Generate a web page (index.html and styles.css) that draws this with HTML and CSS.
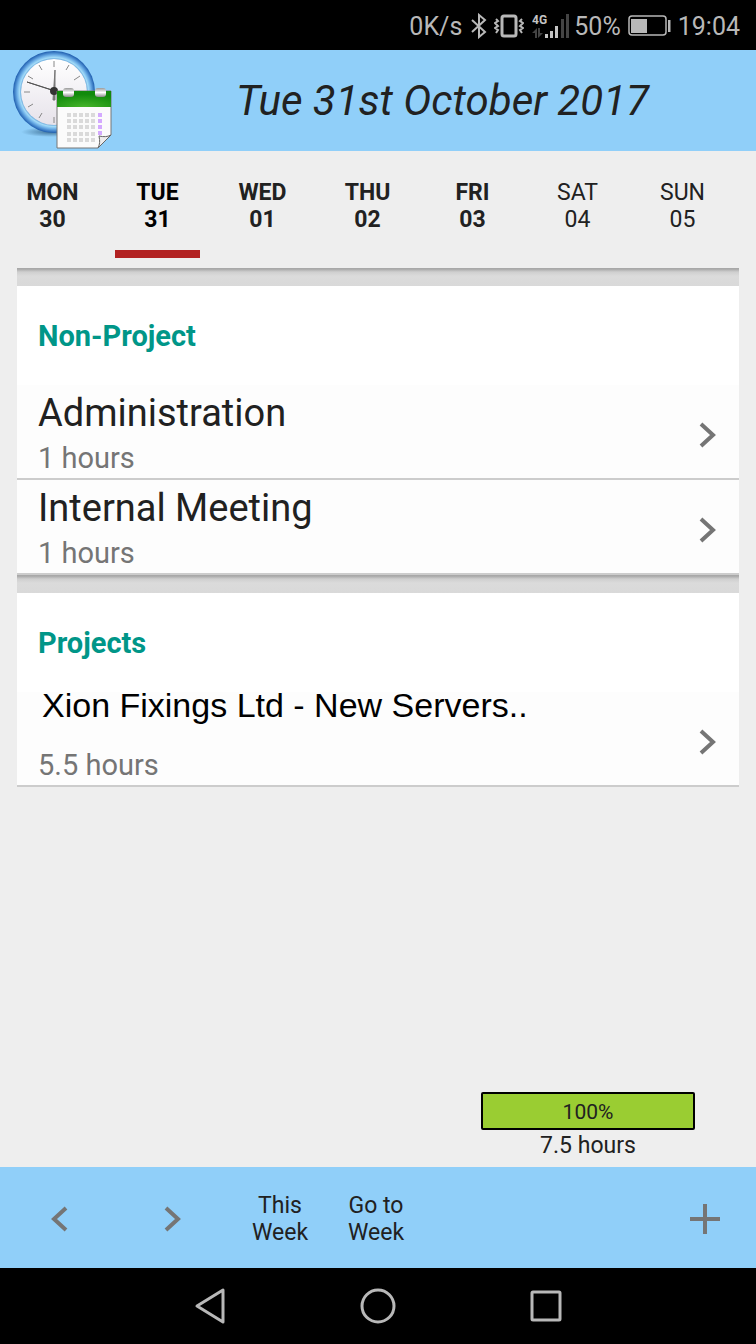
FILE: index.html
```html
<!DOCTYPE html>
<html lang="en">
<head>
  <meta charset="UTF-8">
  <meta name="viewport" content="width=device-width, initial-scale=1.0">
  <title>Timesheet</title>
  <link rel="stylesheet" href="styles.css">
</head>
<body>
  <div class="status-bar">
    <span>0K/s</span>
    <svg class="bluetooth" width="16" height="26" viewBox="0 0 16 26" fill="none" stroke="#b8b8b8" stroke-width="2">
      <path d="M1 7l13 12-6 5V2l6 5L1 19"/>
    </svg>
    <svg class="vibrate" width="30" height="24" viewBox="0 0 30 24" fill="none" stroke="#b8b8b8" stroke-width="2">
      <rect x="8" y="2" width="14" height="20" rx="2" stroke-width="3"/>
      <path d="M2 5l2 2-3 2 3 3-3 2 3 2-2 3M28 5l-2 2 3 2-3 3 3 2-3 2 2 3"/>
    </svg>
    <svg class="signal" width="38" height="26" viewBox="0 0 38 26">
      <text x="0" y="11" class="signal-text">4G</text>
      <path d="M0 20l5-5v10H3v-5zM11 20l-5 5V15h2v5z" fill="#444"/>
      <path d="M13 21h3v4h-3zM18 18h3v7h-3zM23 13h3v12h-3z" fill="#c4c4c4"/>
      <path d="M29 6h3v19h-3zM34 1h3v24h-3z" fill="#444"/>
    </svg>
    <span class="percent">50%</span>
    <svg class="battery" width="44" height="22" viewBox="0 0 44 22">
      <rect x="1" y="1" width="37" height="19" rx="3" fill="none" stroke="#b8b8b8" stroke-width="1.5"/>
      <rect x="3" y="4" width="16" height="14" fill="#b8b8b8"/>
      <path d="M40 5h2.500v12H40z" fill="#b8b8b8"/>
    </svg>
    <span>19:04</span>
  </div>

  <header class="header">
    <svg class="logo" width="102" height="101" viewBox="0 0 102 101">
      <defs>
        <radialGradient id="rim">
          <stop offset="76%" stop-color="#2f72be"/>
          <stop offset="84%" stop-color="#a4dcf8"/>
          <stop offset="90%" stop-color="#6eb0e8"/>
          <stop offset="100%" stop-color="#1d5cae"/>
        </radialGradient>
        <linearGradient id="face" x1="0" y1="0" x2="0" y2="1">
          <stop offset="0" stop-color="#fff"/>
          <stop offset="1" stop-color="#e6e2ea"/>
        </linearGradient>
        <radialGradient id="green" cx="50%" cy="100%" r="80%">
          <stop offset="0" stop-color="#46b52a"/>
          <stop offset="1" stop-color="#118a0c"/>
        </radialGradient>
        <linearGradient id="ring" x1="0" y1="0" x2="0" y2="1">
          <stop offset="0" stop-color="#999"/>
          <stop offset="50%" stop-color="#fff"/>
          <stop offset="1" stop-color="#888"/>
        </linearGradient>
        <radialGradient id="shade">
          <stop offset="0" stop-color="#1c4b70" stop-opacity=".7"/>
          <stop offset="1" stop-color="#1c4b70" stop-opacity="0"/>
        </radialGradient>
      </defs>
      <ellipse cx="38" cy="82" rx="30" ry="5" fill="url(#shade)"/>
      <circle cx="41" cy="42" r="41" fill="url(#rim)"/>
      <circle cx="41" cy="42" r="33" fill="url(#face)"/>
      <path d="M41 11v6M56 15l-3 5M67 26l-6 4M26 15l3 5M15 26l5 3M11 42h6M15 57l5-3M26 68l3-5M41 73v-6" stroke="#888" stroke-width="1" fill="none"/>
      <path d="M39 40l6 2-31-10z" fill="#555" stroke="#555" stroke-width="1"/>
      <path d="M40 50h2l0-30z" fill="#777" stroke="#777" stroke-width="1"/>
      <circle cx="41" cy="41" r="4" fill="#333"/>
      <path d="M44 41h54v44l-13 13H44z" fill="#fbfbfb" stroke="#777" stroke-width="1"/>
      <path d="M44 41h54v16H44z" fill="url(#green)"/>
      <rect x="50" y="38" width="11" height="9" rx="3" fill="url(#ring)"/>
      <rect x="82" y="38" width="11" height="9" rx="3" fill="url(#ring)"/>
      <path d="M54 65h28M54 71h28M54 77h28M54 84h28M54 90h28" stroke="#dadada" stroke-width="4" stroke-dasharray="4 2"/>
      <path d="M87 63v22" stroke="#d4aaff" stroke-width="4" stroke-dasharray="4 2"/>
      <path d="M85 98c2-4 2-7 1-12 5 1 8 1 12-1z" fill="#ececec" stroke="#666" stroke-width="1"/>
    </svg>
    <h1>Tue 31st October 2017</h1>
  </header>

  <nav class="days">
    <button class="day">MON<br>30</button>
    <button class="day active">TUE<br>31</button>
    <button class="day">WED<br>01</button>
    <button class="day">THU<br>02</button>
    <button class="day">FRI<br>03</button>
    <button class="day weekend">SAT<br>04</button>
    <button class="day weekend">SUN<br>05</button>
  </nav>

  <main>
    <section class="group">
      <h2>Non-Project</h2>
      <a class="item" href="#">
        <span class="item-text">
          <span class="name">Administration</span>
          <span class="hours">1 hours</span>
        </span>
        <svg width="18" height="26" viewBox="0 0 18 26"><path d="M2 2l12 11L2 24" class="chevron"/></svg>
      </a>
      <a class="item" href="#">
        <span class="item-text">
          <span class="name">Internal Meeting</span>
          <span class="hours">1 hours</span>
        </span>
        <svg width="18" height="26" viewBox="0 0 18 26"><path d="M2 2l12 11L2 24" class="chevron"/></svg>
      </a>
    </section>
    <section class="group">
      <h2>Projects</h2>
      <a class="item" href="#">
        <span class="item-text">
          <span class="name project">Xion Fixings Ltd - New Servers..</span>
          <span class="hours">5.5 hours</span>
        </span>
        <svg width="18" height="26" viewBox="0 0 18 26"><path d="M2 2l12 11L2 24" class="chevron"/></svg>
      </a>
    </section>
  </main>

  <div class="total">
    <div class="bar">100%</div>
    <div class="total-hours">7.5 hours</div>
  </div>

  <footer class="toolbar">
    <button class="arrow" aria-label="Previous week">
      <svg width="18" height="26" viewBox="0 0 18 26"><path d="M15 2L3 13l12 11" class="chevron"/></svg>
    </button>
    <button class="arrow" aria-label="Next week">
      <svg width="18" height="26" viewBox="0 0 18 26"><path d="M2 2l12 11L2 24" class="chevron"/></svg>
    </button>
    <button class="week">This<br>Week</button>
    <button class="week">Go to<br>Week</button>
    <button class="add" aria-label="Add entry">
      <svg width="30" height="30" viewBox="0 0 30 30"><path d="M15 0v30M0 15h30" class="chevron"/></svg>
    </button>
  </footer>

  <div class="system-nav">
    <button aria-label="Back">
      <svg width="34" height="38" viewBox="0 0 34 38"><path d="M30 3v32L4 19z"/></svg>
    </button>
    <button aria-label="Home">
      <svg width="38" height="38" viewBox="0 0 38 38"><circle cx="19" cy="19" r="16"/></svg>
    </button>
    <button aria-label="Recent apps">
      <svg width="34" height="38" viewBox="0 0 34 38"><rect x="3" y="5" width="28" height="28" rx="1"/></svg>
    </button>
  </div>
</body>
</html>
```

FILE: styles.css
```css
* {
  box-sizing: border-box;
}

body {
  font-family: Roboto, sans-serif;
  background-color: #eeeeee;
  color: #212121;
  margin: 0;
  min-height: 100vh;
  display: flex;
  flex-direction: column;
}

button {
  font-family: inherit;
  color: inherit;
  background: none;
  border: none;
  padding: 0;
  cursor: pointer;
}

svg {
  display: block;
  flex: none;
}

.status-bar {
  height: 50px;
  padding: 2px 16px 0 0;
  background-color: #000;
  color: #b8b8b8;
  font-size: 25px;
  display: flex;
  justify-content: flex-end;
  align-items: center;
}

.bluetooth {
  margin-left: 9px;
}

.vibrate {
  margin-left: 7px;
}

.signal {
  margin-left: 8px;
}

.signal-text {
  font-size: 12px;
  font-weight: bold;
  fill: #c4c4c4;
}

.percent {
  margin: 0 7px 0 4px;
}

.battery {
  margin-right: 6px;
}

.header {
  height: 101px;
  padding-left: 13px;
  background-color: #90cff9;
  display: flex;
  align-items: center;
}

.header h1 {
  flex: 1;
  margin: 0;
  padding-left: 14px;
  font-size: 42px;
  font-weight: normal;
  font-style: italic;
  text-align: center;
}

.days {
  height: 117px;
  padding: 0 21px 10px 0;
  display: grid;
  grid-template-columns: repeat(7, 1fr);
}

.day {
  margin: 0 10px;
  padding-top: 11px;
  border-bottom: 8px solid transparent;
  font-size: 23px;
  line-height: 27px;
  font-weight: bold;
}

.day.active {
  color: #000;
  border-bottom-color: #b22222;
}

.day.weekend {
  font-weight: normal;
}

main {
  margin: 0 17px;
}

.group {
  background-color: #fff;
  border-top: 1px solid #a8a8a8;
}

.group::before {
  content: "";
  display: block;
  height: 17px;
  background: linear-gradient(#a8a8a8, #cfcfcf 3px, #dbdbdb 7px, #d9d9d9);
}

.group h2 {
  margin: 0;
  height: 99px;
  padding-left: 21px;
  color: #009688;
  font-size: 29px;
  line-height: 101px;
}

.item {
  min-height: 95px;
  padding: 3px 22px 0 21px;
  background-color: #fdfdfd;
  border-bottom: 2px solid #cccccc;
  color: inherit;
  text-decoration: none;
  display: flex;
  align-items: center;
  justify-content: space-between;
}

.item svg {
  margin-top: 4px;
}

.item-text {
  display: flex;
  flex-direction: column;
}

.name {
  font-size: 38px;
  line-height: 50px;
}

.name.project {
  margin-bottom: 30px;
  padding-left: 4px;
  font-family: "Liberation Sans", Arial, sans-serif;
  font-size: 34px;
  line-height: 20px;
  color: #000;
}

.hours {
  color: #757575;
  font-size: 29px;
  line-height: 40px;
}

.chevron {
  fill: none;
  stroke: #757575;
  stroke-width: 4;
}

.total {
  width: 214px;
  margin: auto 61px 5px auto;
  text-align: center;
}

.bar {
  height: 38px;
  border: 2px solid #000;
  border-radius: 2px;
  background-color: #9acd32;
  font-size: 21px;
  line-height: 36px;
}

.total-hours {
  font-size: 23px;
  line-height: 32px;
}

.toolbar {
  height: 101px;
  padding: 2px 36px 0 3px;
  background-color: #90cff9;
  display: flex;
  align-items: center;
}

.arrow {
  width: 113px;
  height: 100%;
  display: flex;
  align-items: center;
  justify-content: center;
}

.week {
  width: 96px;
  height: 100%;
  font-size: 23px;
  line-height: 27px;
}

.arrow + .week {
  margin-left: 3px;
}

.add {
  margin-left: auto;
}

.system-nav {
  height: 76px;
  background-color: #000;
  display: flex;
  align-items: center;
  justify-content: center;
}

.system-nav button {
  width: 168px;
  height: 100%;
  display: flex;
  align-items: center;
  justify-content: center;
}

.system-nav svg {
  fill: none;
  stroke: #b8b8b8;
  stroke-width: 3;
  stroke-linejoin: round;
}
```
